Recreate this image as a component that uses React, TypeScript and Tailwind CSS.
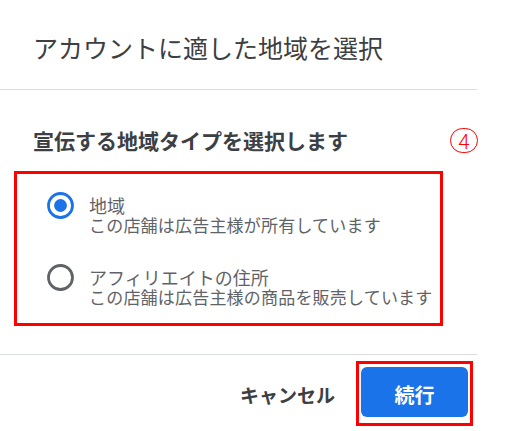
import React from "react";

const FONT = { fontFamily: '"Noto Sans CJK JP", "Noto Sans", sans-serif' };

function Radio({ checked }: { checked: boolean }) {
  const c = checked ? "#1a73e8" : "#5f6368";
  return (
    <svg width="27" height="27" viewBox="0 0 27 27" className="shrink-0">
      <circle cx="13.5" cy="13.5" r="12" fill="none" stroke={c} strokeWidth="2.8" />
      {checked && <circle cx="13.5" cy="13.5" r="6.4" fill={c} />}
    </svg>
  );
}

function Option({ checked, label, sub }: { checked: boolean; label: string; sub: string }) {
  return (
    <div className="flex items-start">
      <div className="ml-[30px] mt-[-3.5px]">
        <Radio checked={checked} />
      </div>
      <div className="ml-[15px] flex flex-col text-[#5f6368]">
        <div className="text-[18px] leading-[20px]">{label}</div>
        <div className="text-[17px] leading-[20px] tracking-[0.2px]">{sub}</div>
      </div>
    </div>
  );
}

export default function App() {
  return (
    <div className="w-[507px] h-[431px] bg-white overflow-hidden" style={FONT}>
      <div className="w-[477px] h-full flex flex-col">
        <div className="h-[89px] pt-[31px] pl-[33px]">
          <div className="text-[25px] leading-[32px] text-[#3c4043]">アカウントに適した地域を選択</div>
        </div>
        <div className="h-px bg-[#dadce0]" />
        <div className="pt-[36px] pb-[28px]">
          <div className="flex items-center justify-between pl-[33px] h-[28px]">
            <div className="text-[21px] leading-[28px] font-bold text-[#3c4043]">宣伝する地域タイプを選択します</div>
            <div className="mr-[-1px] w-[28px] h-[25px] rounded-full border-[1.5px] border-[#ff0000] flex items-center justify-center text-[#ff0000] text-[21px] leading-[22px] font-light">
              4
            </div>
          </div>
          <div className="mt-[17px] ml-[14px] w-[429px] border-[3px] border-[#ff0000] pt-[21px] pb-[16px] flex flex-col gap-[32px]">
            <Option checked={true} label="地域" sub="この店舗は広告主様が所有しています" />
            <Option checked={false} label="アフィリエイトの住所" sub="この店舗は広告主様の商品を販売しています" />
          </div>
        </div>
        <div className="h-px bg-[#dadce0]" />
        <div className="pt-[6px] pr-[4px] flex justify-end items-center">
          <div className="mr-[21px] pt-[3px] text-[19px] leading-[24px] font-bold text-[#3c4043]">キャンセル</div>
          <div className="border-[3px] border-[#ff0000] pl-[2px] pr-[2px] pt-[3px] pb-[6px]">
            <div className="w-[107px] h-[50px] rounded-[6px] bg-[#1a73e8] flex items-center justify-center pt-[6px] text-white text-[20px] leading-[24px] font-bold">
              続行
            </div>
          </div>
        </div>
      </div>
    </div>
  );
}
